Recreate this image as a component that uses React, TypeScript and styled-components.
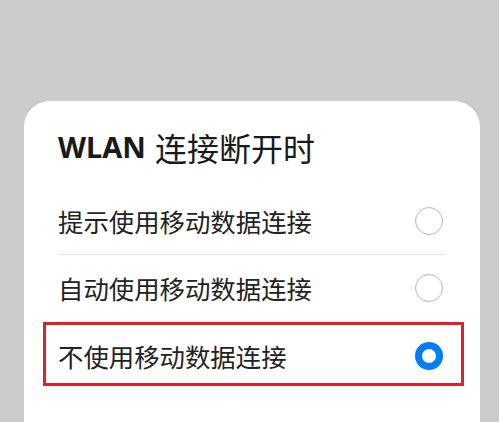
import React from "react";
import styled, { createGlobalStyle } from "styled-components";

const Global = createGlobalStyle`
  html, body {
    margin: 0;
    padding: 0;
    background: #cccccc;
    overflow: hidden;
  }
  body {
    font-family: "Noto Sans", "Noto Sans CJK SC", sans-serif;
    color: #1f1f1f;
  }
`;

const Page = styled.div`
  height: 422px;
  padding: 101px 19px 0 24px;
  box-sizing: border-box;
  overflow: hidden;
`;

const Card = styled.div`
  background: #ffffff;
  border-radius: 26px 26px 0 0;
  padding: 26px 34px 0 34px;
  height: 340px;
  box-sizing: border-box;
`;

const Title = styled.h1`
  margin: 0 0 21px 0;
  height: 40px;
  line-height: 40px;
  display: flex;
  align-items: center;
  gap: 9px;
  color: #1a1a1a;
  font-weight: 400;
`;

const TitleLatin = styled.span`
  font-family: "Noto Sans", sans-serif;
  font-size: 29px;
  font-weight: 700;
`;

const TitleCjk = styled.span`
  font-family: "Noto Sans CJK SC", sans-serif;
  font-size: 32px;
  font-weight: 400;
`;

const List = styled.div`
  display: flex;
  flex-direction: column;
`;

const Row = styled.label<{ $divider?: boolean }>`
  position: relative;
  height: 67px;
  display: flex;
  align-items: center;
  justify-content: space-between;
  padding-right: 3px;
  box-sizing: border-box;
  border-bottom: ${(p) => (p.$divider ? "1px solid #e7e7e7" : "none")};
`;

const RowText = styled.span`
  font-family: "Noto Sans CJK SC", sans-serif;
  font-size: 25.4px;
  line-height: 36px;
  color: #222222;
`;

const Radio = styled.span<{ $checked?: boolean }>`
  width: 28px;
  height: 28px;
  border-radius: 50%;
  box-sizing: border-box;
  background: #ffffff;
  border: ${(p) => (p.$checked ? "7.5px solid #007dff" : "1.5px solid #b8b8b8")};
  flex-shrink: 0;
`;

const Highlight = styled.span`
  position: absolute;
  left: -15px;
  right: -18px;
  top: 0;
  height: 64px;
  border: 3px solid #e2202c;
  box-sizing: border-box;
  pointer-events: none;
`;

const options = [
  { text: "提示使用移动数据连接", checked: false },
  { text: "自动使用移动数据连接", checked: false },
  { text: "不使用移动数据连接", checked: true },
];

export default function App() {
  return (
    <>
      <Global />
      <Page>
        <Card>
          <Title>
            <TitleLatin>WLAN</TitleLatin>
            <TitleCjk>连接断开时</TitleCjk>
          </Title>
          <List>
            {options.map((o, i) => (
              <Row key={o.text} $divider={i < options.length - 1}>
                <RowText>{o.text}</RowText>
                <Radio $checked={o.checked} />
                {o.checked && <Highlight />}
              </Row>
            ))}
          </List>
        </Card>
      </Page>
    </>
  );
}
